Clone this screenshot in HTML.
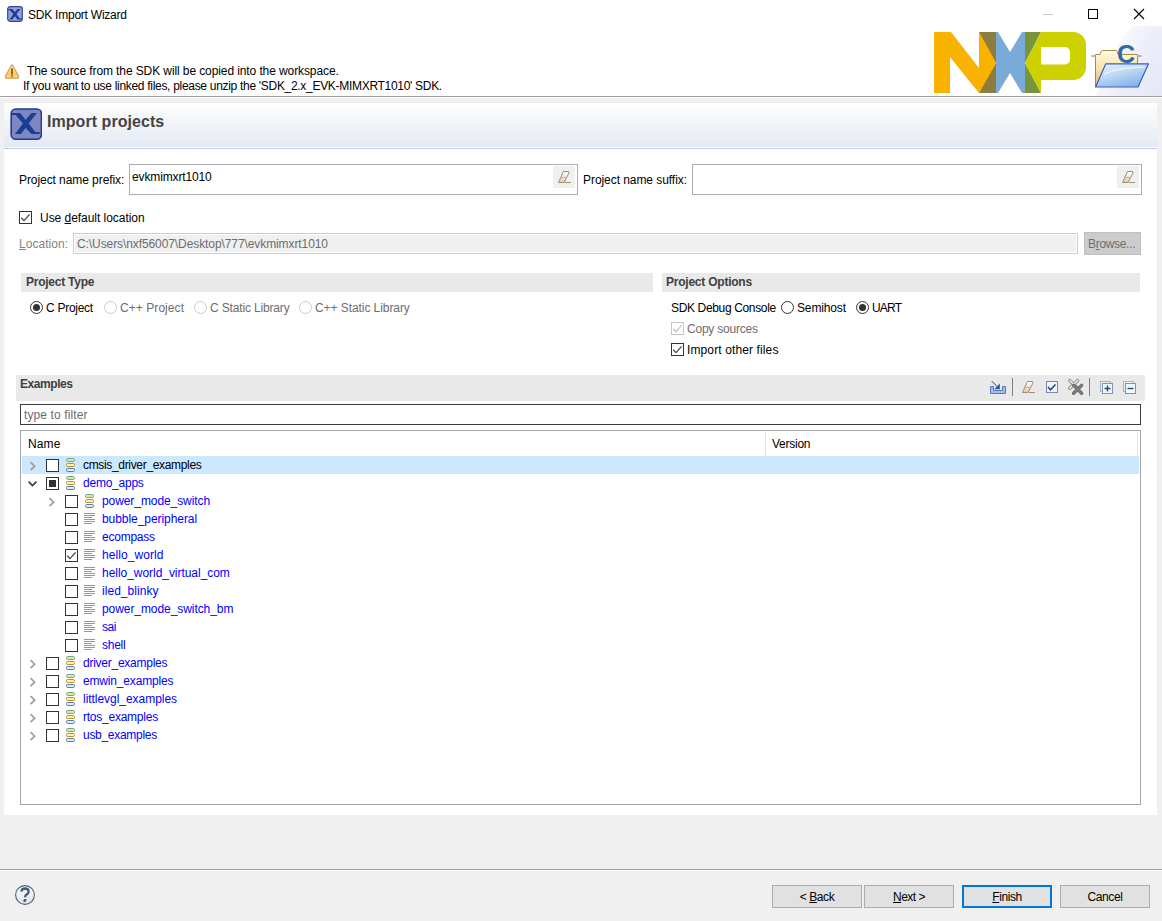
<!DOCTYPE html>
<html><head><meta charset="utf-8">
<style>
*{box-sizing:border-box}
html,body{margin:0;padding:0}
body{width:1162px;height:921px;overflow:hidden;position:relative;background:#f0f0f0;font-family:"Liberation Sans",sans-serif;font-size:12px;color:#000}
.a{position:absolute}
.t{position:absolute;white-space:nowrap;line-height:14px}
.b{font-weight:bold}
.cb{position:absolute;width:13px;height:13px;border:1px solid #333;background:#fff}
.rd{position:absolute;width:13px;height:13px;border:1px solid #333;border-radius:50%;background:#fff}
.hdr{position:absolute;background:#e9e9e9;height:19px}
.ht{position:absolute;white-space:nowrap;line-height:14px;font-weight:bold;color:#404040}
.btn{position:absolute;top:885px;height:23px;width:90px;border:1px solid #adadad;background:#e1e1e1;text-align:center;line-height:23px}
.lnk{color:#0000ff}
.gr{color:#6d6d6d}
u{text-decoration:underline;text-underline-offset:1px}
</style></head><body>
<!-- title bar + banner -->
<div class="a" style="left:0;top:0;width:1162px;height:96px;background:#fff"></div>
<div class="a" style="left:0;top:96px;width:1162px;height:1px;background:#a0a0a0"></div>
<div class="a" style="left:0;top:97px;width:1162px;height:1px;background:#fff"></div>

<!-- window icon -->
<svg class="a" style="left:7px;top:6px" width="16" height="16" viewBox="0 0 32 32">
<rect x="1.4" y="1.4" width="29.2" height="29.2" rx="5" fill="#9a9ed6" stroke="#27459a" stroke-width="2.4"/>
<path d="M3 6H10.5L15.8 12.2L21.2 6H27L18.9 15.8L25.2 24.5H29.5V27H21.2L15.8 20.6L10.8 27H5L12.7 15.8L5.8 8.5H3Z" fill="#173f96"/>
</svg>
<div class="t" style="left:28px;top:8px;letter-spacing:-0.23px">SDK Import Wizard</div>

<!-- window controls -->
<div class="a" style="left:1043px;top:14px;width:10px;height:1px;background:#c4c4c4"></div>
<div class="a" style="left:1088px;top:9px;width:10px;height:10px;border:1px solid #000"></div>
<svg class="a" style="left:1133px;top:8px" width="12" height="12" viewBox="0 0 12 12"><path d="M1 1L11 11M11 1L1 11" stroke="#000" stroke-width="1.1"/></svg>

<!-- warning -->
<svg class="a" style="left:4px;top:63px" width="16" height="17" viewBox="0 0 16 17">
<defs><linearGradient id="wg" x1="0" y1="0" x2="0" y2="1"><stop offset="0" stop-color="#fff8d8"/><stop offset="0.7" stop-color="#fcc95c"/><stop offset="1" stop-color="#fde08a"/></linearGradient></defs>
<path d="M8 1.8Q8.3 1.8 8.6 2.3L14.6 13.2Q15 14.8 13.6 15.2H2.4Q1 14.8 1.4 13.2L7.4 2.3Q7.7 1.8 8 1.8Z" fill="url(#wg)" stroke="#d29d52" stroke-width="1.2"/>
<rect x="7.1" y="5.2" width="1.8" height="6.3" rx="0.5" fill="#7d5616"/><rect x="7.1" y="12.2" width="1.8" height="1.6" fill="#8a6420"/>
</svg>
<div class="t" style="left:27.0px;top:64px;letter-spacing:-0.10px">The source from the SDK will be copied into the workspace.</div>
<div class="t" style="left:23px;top:79px;letter-spacing:-0.30px">If you want to use linked files, please unzip the 'SDK_2.x_EVK-MIMXRT1010' SDK.</div>

<!-- banner bg swoosh -->
<div class="a" style="left:1060px;top:26px;width:102px;height:70px;overflow:hidden">
<div class="a" style="left:30px;top:-60px;width:344px;height:344px;border-radius:50%;background:radial-gradient(circle closest-side at 50% 50%,#e2e4f4 0%,#e5e7f5 60%,#ecedf9 85%,#f6f6fc 99%,rgba(255,255,255,0) 100%)"></div>
</div>
<!-- NXP logo -->
<svg class="a" style="left:934px;top:32px" width="152" height="62" viewBox="0 0 152 62">
<polygon points="0,0 17,0 45,36 45,0 62,0 62,61 45,61 16,25 16,61 0,61" fill="#f9b200"/>
<polygon points="45,0 62,0 62,31" fill="#8b7d3c"/>
<polygon points="62,31 62,61 45,61" fill="#8b7d3c"/>
<polygon points="45,0 45,61 62,31" fill="#f9b200"/>
<polygon points="62,0 64,0 76,20 88,0 91,0 91,61 88,61 76,41 64,61 62,61" fill="#7aabd8"/>
<polygon points="91,0 107,0 91,31" fill="#7a943c"/>
<polygon points="91,31 107,61 91,61" fill="#7a943c"/>
<polygon points="107,0 91,31 107,61" fill="#cdd100"/>
<path d="M107 0H139A13 13 0 0 1 152 13V35A13 13 0 0 1 139 48H107V32.5H131A5 5 0 0 0 136 27.5V20A5 5 0 0 0 131 15H107Z" fill="#cdd100"/>
</svg>

<!-- folder icon -->
<svg class="a" style="left:1090px;top:40px" width="64" height="50" viewBox="0 0 64 50">
<defs>
<linearGradient id="fb" x1="0" y1="0" x2="0" y2="1"><stop offset="0" stop-color="#fffbe8"/><stop offset="0.5" stop-color="#f7e2a8"/><stop offset="1" stop-color="#e3bd6a"/></linearGradient>
<linearGradient id="ff" x1="0" y1="0" x2="0.6" y2="1"><stop offset="0" stop-color="#eef6fe"/><stop offset="0.45" stop-color="#c2dcf6"/><stop offset="1" stop-color="#86b4e8"/></linearGradient>
</defs>
<path d="M5.5 46V14.5H10Q10.5 10.5 13 10.5H26Q27.5 10.5 28 14.5H47.5V46Z" fill="url(#fb)" stroke="#a88845" stroke-width="1"/>
<text x="27" y="22.5" font-family="Liberation Sans" font-weight="bold" font-size="25" fill="#2f6aa6">C</text>
<ellipse cx="3.5" cy="16" rx="2.5" ry="1" fill="#b0b0b0"/>
<ellipse cx="49.5" cy="16" rx="2.5" ry="1" fill="#b0b0b0"/>
<path d="M15.8 23.8H58.5L48 47H5.6Z" fill="url(#ff)" stroke="#3a5ccc" stroke-width="1.2" stroke-linejoin="round"/>
<path d="M14 34Q30 27 55 27" stroke="#ffffff" stroke-opacity="0.6" stroke-width="1.5" fill="none"/>
</svg>

<!-- panel -->
<div class="a" style="left:4px;top:103px;width:1153px;height:712px;background:#fff"></div>
<div class="a" style="left:4px;top:103px;width:1153px;height:44px;background:linear-gradient(#fefefe 0%,#f5f7fa 35%,#e3e9f3 100%)"></div>
<div class="a" style="left:4px;top:148px;width:1153px;height:1px;background:#bccddf"></div>
<svg class="a" style="left:10px;top:108px" width="32" height="32" viewBox="0 0 32 32">
<rect x="1.2" y="1" width="30.2" height="30.2" rx="4.5" fill="#7f86c0" stroke="#1d3e93" stroke-width="1.6"/>
<path d="M1.9 5H10.1L15.6 11.7L21.5 5H26.9L18.7 15.6L25.4 24H29.7V26H21.5L15.6 19.9L10.9 26H5L12.9 15.6L5.8 7H1.9Z" fill="#173f96"/>
</svg>
<div class="t b" style="left:47px;top:113px;font-size:16px;line-height:18px;color:#444;letter-spacing:0.05px">Import projects</div>

<!-- prefix/suffix -->
<div class="t" style="left:19px;top:173px;letter-spacing:-0.07px">Project name prefix:</div>
<div class="a" style="left:129px;top:164px;width:449px;height:31px;border:1px solid #abadb3;background:#fff"></div>
<div class="t" style="left:132px;top:170px;letter-spacing:-0.13px">evkmimxrt1010</div>
<div class="a" style="left:553px;top:166px;width:22px;height:22px;background:#f0f0f0"></div>
<svg class="a" style="left:558px;top:171px" width="14" height="13" viewBox="0 0 14 13">
<defs><linearGradient id="eg558" x1="0" y1="0" x2="0" y2="1"><stop offset="0" stop-color="#ffffff"/><stop offset="0.4" stop-color="#f3ece2"/><stop offset="1" stop-color="#dccab0"/></linearGradient></defs>
<path d="M5.5 0.5H10Q11.5 0.5 11 2L6 11.5H0.5L5 1.5Q5.2 0.5 5.5 0.5Z" fill="url(#eg558)" stroke="#a38d68" stroke-width="1"/>
<path d="M3 6.5H8.5" stroke="#c8b69a" stroke-width="1"/>
<path d="M7 11.5H13" stroke="#a38d68" stroke-width="1"/>
</svg>
<div class="t" style="left:583px;top:173px;letter-spacing:-0.06px">Project name suffix:</div>
<div class="a" style="left:692px;top:164px;width:450px;height:31px;border:1px solid #abadb3;background:#fff"></div>
<div class="a" style="left:1117px;top:166px;width:22px;height:22px;background:#f0f0f0"></div>
<svg class="a" style="left:1122px;top:171px" width="14" height="13" viewBox="0 0 14 13">
<defs><linearGradient id="eg1122" x1="0" y1="0" x2="0" y2="1"><stop offset="0" stop-color="#ffffff"/><stop offset="0.4" stop-color="#f3ece2"/><stop offset="1" stop-color="#dccab0"/></linearGradient></defs>
<path d="M5.5 0.5H10Q11.5 0.5 11 2L6 11.5H0.5L5 1.5Q5.2 0.5 5.5 0.5Z" fill="url(#eg1122)" stroke="#a38d68" stroke-width="1"/>
<path d="M3 6.5H8.5" stroke="#c8b69a" stroke-width="1"/>
<path d="M7 11.5H13" stroke="#a38d68" stroke-width="1"/>
</svg>

<!-- default location -->
<div class="cb" style="left:19px;top:211px"></div>
<svg class="a" style="left:19px;top:211px" width="13" height="13"><path d="M2.3 6.8L5 9.6L10.6 3.4" stroke="#444" stroke-width="1.3" fill="none"/></svg>
<div class="t" style="left:40px;top:211px;letter-spacing:-0.04px">Use <u>d</u>efault location</div>
<div class="t" style="left:19px;top:237px;letter-spacing:0.04px;color:#838383"><u>L</u>ocation:</div>
<div class="a" style="left:73px;top:233px;width:1005px;height:21px;border:1px solid #cccccc;box-shadow:inset 0 0 0 1px #fff;background:#f0f0f0"></div>
<div class="t gr" style="left:77px;top:237px;letter-spacing:-0.09px">C:\Users\nxf56007\Desktop\777\evkmimxrt1010</div>
<div class="a" style="left:1084px;top:232px;width:57px;height:23px;border:1px solid #bfbfbf;background:#cccccc"></div>
<div class="t gr" style="left:1088.0px;top:237px;letter-spacing:-0.32px">B<u>r</u>owse...</div>

<!-- Project type -->
<div class="hdr" style="left:21px;top:273px;width:632px"></div>
<div class="ht" style="left:26.0px;top:275px;letter-spacing:-0.25px">Project Type</div>
<div class="rd" style="left:30px;top:301px"></div>
<div class="a" style="left:33px;top:304px;width:7px;height:7px;border-radius:50%;background:#333"></div>
<div class="t" style="left:46px;top:301px;letter-spacing:-0.27px">C Project</div>
<div class="rd" style="left:104px;top:301px;border-color:#ccc"></div>
<div class="t gr" style="left:120px;top:301px;letter-spacing:0.06px">C++ Project</div>
<div class="rd" style="left:194px;top:301px;border-color:#ccc"></div>
<div class="t gr" style="left:210px;top:301px;letter-spacing:-0.16px">C Static Library</div>
<div class="rd" style="left:299px;top:301px;border-color:#ccc"></div>
<div class="t gr" style="left:315px;top:301px;letter-spacing:-0.07px">C++ Static Library</div>

<!-- Project options -->
<div class="hdr" style="left:662px;top:273px;width:478px"></div>
<div class="ht" style="left:666px;top:275px;letter-spacing:-0.23px">Project Options</div>
<div class="t" style="left:671px;top:301px;letter-spacing:-0.35px">SDK Debug Console</div>
<div class="rd" style="left:781px;top:301px"></div>
<div class="t" style="left:797px;top:301px;letter-spacing:-0.14px">Semihost</div>
<div class="rd" style="left:856px;top:301px"></div>
<div class="a" style="left:859px;top:304px;width:7px;height:7px;border-radius:50%;background:#333"></div>
<div class="t" style="left:872px;top:301px;letter-spacing:-0.80px">UART</div>
<div class="cb" style="left:671px;top:322px;border-color:#c6c6c6"></div>
<svg class="a" style="left:671px;top:322px" width="13" height="13"><path d="M2.3 6.8L5 9.6L10.6 3.4" stroke="#c6c6c6" stroke-width="1.4" fill="none"/></svg>
<div class="t gr" style="left:687px;top:322px;letter-spacing:-0.22px">Copy sources</div>
<div class="cb" style="left:671px;top:343px"></div>
<svg class="a" style="left:671px;top:343px" width="13" height="13"><path d="M2.3 6.8L5 9.6L10.6 3.4" stroke="#444" stroke-width="1.3" fill="none"/></svg>
<div class="t" style="left:687px;top:343px;letter-spacing:0.12px">Import other files</div>

<!-- Examples -->
<div class="a" style="left:16px;top:375px;width:1129px;height:26px;background:#e9e9e9"></div>
<div class="ht" style="left:20px;top:377px;letter-spacing:-0.43px">Examples</div>
<div class="a" style="left:20px;top:404px;width:1121px;height:21px;border:1px solid #3c3c3c;background:#fff"></div>
<div class="t gr" style="left:24px;top:408px;letter-spacing:0.12px">type to filter</div>

<!-- toolbar -->
<svg class="a" style="left:989px;top:379px" width="18" height="16" viewBox="0 0 18 16">
<path d="M1.5 7.5V14.5H16.5V7.5H13.5V11.5H4.5V7.5Z" fill="#a3bde6" stroke="#5677bb" stroke-width="1"/>
<path d="M2.8 2.2L8.2 7.6" stroke="#27389a" stroke-width="1"/>
<path d="M10.8 4.6V10.2H5.2Z" fill="#1d5aa8"/>
</svg>
<div class="a" style="left:1012px;top:378px;width:1px;height:18px;background:#7f7f7f"></div>
<svg class="a" style="left:1022px;top:381px" width="14" height="13" viewBox="0 0 14 13">
<defs><linearGradient id="eg1022" x1="0" y1="0" x2="0" y2="1"><stop offset="0" stop-color="#ffffff"/><stop offset="0.4" stop-color="#f3ece2"/><stop offset="1" stop-color="#dccab0"/></linearGradient></defs>
<path d="M5.5 0.5H10Q11.5 0.5 11 2L6 11.5H0.5L5 1.5Q5.2 0.5 5.5 0.5Z" fill="url(#eg1022)" stroke="#a38d68" stroke-width="1"/>
<path d="M3 6.5H8.5" stroke="#c8b69a" stroke-width="1"/>
<path d="M7 11.5H13" stroke="#a38d68" stroke-width="1"/>
</svg>
<svg class="a" style="left:1046px;top:381px" width="13" height="13" viewBox="0 0 13 13">
<rect x="0.5" y="0.5" width="11" height="11" fill="#e6f5ff" stroke="#7b8aa6"/>
<path d="M2 6L4.5 8.8L9.5 3.5" fill="none" stroke="#2b4a7c" stroke-width="1.6"/>
</svg>
<svg class="a" style="left:1067px;top:378px" width="18" height="18" viewBox="0 0 18 18">
<path d="M2.8 2.6L10.6 10.2M10.6 2.6L2.8 10.2" stroke="#8f8f88" stroke-width="3.4" stroke-linecap="round"/>
<path d="M2.8 2.6L10.6 10.2M10.6 2.6L2.8 10.2" stroke="#f2f2f2" stroke-width="1.4" stroke-linecap="round"/>
<path d="M6.6 7.4L14.6 15.2M14.6 7.4L6.6 15.2" stroke="#6a6a6a" stroke-width="3.4" stroke-linecap="round"/>
<path d="M6.6 7.4L14.6 15.2M14.6 7.4L6.6 15.2" stroke="#858585" stroke-width="1.2" stroke-linecap="round"/>
</svg>
<div class="a" style="left:1089px;top:378px;width:1px;height:18px;background:#7f7f7f"></div>
<svg class="a" style="left:1100px;top:381px" width="14" height="14" viewBox="0 0 14 14">
<rect x="0.5" y="0.5" width="10" height="10" fill="#e3f3fd" stroke="#a4b4cc"/>
<rect x="2.5" y="2.5" width="10" height="10" fill="#eef9ff" stroke="#8592aa"/>
<path d="M4.5 7.5H10.5M7.5 4.5V10.5" stroke="#1d4a80" stroke-width="1.4"/>
</svg>
<svg class="a" style="left:1123px;top:381px" width="14" height="14" viewBox="0 0 14 14">
<rect x="0.5" y="0.5" width="10" height="10" fill="#e3f3fd" stroke="#a4b4cc"/>
<rect x="2.5" y="2.5" width="10" height="10" fill="#eef9ff" stroke="#8592aa"/>
<path d="M4.5 7.5H10.5" stroke="#1d4a80" stroke-width="1.4"/>
</svg>
<!-- tree -->
<div class="a" style="left:20px;top:430px;width:1121px;height:375px;border:1px solid #a2a5ac;background:#fff"></div>
<div class="t" style="left:28px;top:437px;letter-spacing:0.13px">Name</div>
<div class="a" style="left:765px;top:432px;width:1px;height:24px;background:#e5e5e5"></div>
<div class="a" style="left:1137px;top:432px;width:1px;height:24px;background:#e5e5e5"></div>
<div class="t" style="left:772px;top:437px;letter-spacing:-0.26px">Version</div>
<div class="a" style="left:22px;top:456px;width:1117px;height:18px;background:#cce8ff"></div>

<!-- tree rows -->
<svg class="a" style="left:28px;top:461px" width="9" height="10"><path d="M2.6 1.2L6.6 5.2L2.6 9.2" stroke="#a0a0a0" stroke-width="1.8" fill="none"/></svg>
<div class="cb" style="left:46px;top:459px"></div>
<svg class="a" style="left:66px;top:458px" width="9" height="14" viewBox="0 0 9 14"><rect x="0.5" y="0.5" width="8" height="3" rx="1.2" fill="#e3e78f" stroke="#72a68e"/><rect x="0.5" y="5.5" width="8" height="3" rx="1.2" fill="#fff2c0" stroke="#b8921e"/><rect x="0.5" y="10.5" width="8" height="3" rx="1.2" fill="#e2ecf0" stroke="#5a7ab8"/></svg>
<div class="t" style="left:83px;top:458px;color:#000;letter-spacing:-0.33px">cmsis_driver_examples</div>
<svg class="a" style="left:28px;top:479px" width="10" height="9"><path d="M0.6 2.7L4.5 6.6L8.4 2.7" stroke="#404040" stroke-width="1.8" fill="none"/></svg>
<div class="cb" style="left:46px;top:477px"></div>
<div class="a" style="left:49px;top:480px;width:7px;height:7px;background:#333"></div>
<svg class="a" style="left:66px;top:476px" width="9" height="14" viewBox="0 0 9 14"><rect x="0.5" y="0.5" width="8" height="3" rx="1.2" fill="#e3e78f" stroke="#72a68e"/><rect x="0.5" y="5.5" width="8" height="3" rx="1.2" fill="#fff2c0" stroke="#b8921e"/><rect x="0.5" y="10.5" width="8" height="3" rx="1.2" fill="#e2ecf0" stroke="#5a7ab8"/></svg>
<div class="t" style="left:83px;top:476px;color:#0000ff;letter-spacing:-0.23px">demo_apps</div>
<svg class="a" style="left:47px;top:497px" width="9" height="10"><path d="M2.6 1.2L6.6 5.2L2.6 9.2" stroke="#a0a0a0" stroke-width="1.8" fill="none"/></svg>
<div class="cb" style="left:65px;top:495px"></div>
<svg class="a" style="left:85px;top:494px" width="9" height="14" viewBox="0 0 9 14"><rect x="0.5" y="0.5" width="8" height="3" rx="1.2" fill="#e3e78f" stroke="#72a68e"/><rect x="0.5" y="5.5" width="8" height="3" rx="1.2" fill="#fff2c0" stroke="#b8921e"/><rect x="0.5" y="10.5" width="8" height="3" rx="1.2" fill="#e2ecf0" stroke="#5a7ab8"/></svg>
<div class="t" style="left:102px;top:494px;color:#0000ff;letter-spacing:-0.08px">power_mode_switch</div>
<div class="cb" style="left:65px;top:513px"></div>
<svg class="a" style="left:84px;top:513px" width="11" height="11" viewBox="0 0 11 11"><path d="M0 0.5H11M0 2.5H11M0 4.5H8M0 6.5H11M0 8.5H11M0 10.5H8" stroke="#8299c2" stroke-width="1"/></svg>
<div class="t" style="left:102px;top:512px;color:#0000ff;letter-spacing:-0.06px">bubble_peripheral</div>
<div class="cb" style="left:65px;top:531px"></div>
<svg class="a" style="left:84px;top:531px" width="11" height="11" viewBox="0 0 11 11"><path d="M0 0.5H11M0 2.5H11M0 4.5H8M0 6.5H11M0 8.5H11M0 10.5H8" stroke="#8299c2" stroke-width="1"/></svg>
<div class="t" style="left:102px;top:530px;color:#0000ff;letter-spacing:-0.23px">ecompass</div>
<div class="cb" style="left:65px;top:549px"></div>
<svg class="a" style="left:65px;top:549px" width="13" height="13"><path d="M2.3 6.8L5 9.6L10.6 3.4" stroke="#444" stroke-width="1.3" fill="none"/></svg>
<svg class="a" style="left:84px;top:549px" width="11" height="11" viewBox="0 0 11 11"><path d="M0 0.5H11M0 2.5H11M0 4.5H8M0 6.5H11M0 8.5H11M0 10.5H8" stroke="#8299c2" stroke-width="1"/></svg>
<div class="t" style="left:102px;top:548px;color:#0000ff;letter-spacing:0.08px">hello_world</div>
<div class="cb" style="left:65px;top:567px"></div>
<svg class="a" style="left:84px;top:567px" width="11" height="11" viewBox="0 0 11 11"><path d="M0 0.5H11M0 2.5H11M0 4.5H8M0 6.5H11M0 8.5H11M0 10.5H8" stroke="#8299c2" stroke-width="1"/></svg>
<div class="t" style="left:102px;top:566px;color:#0000ff;letter-spacing:-0.04px">hello_world_virtual_com</div>
<div class="cb" style="left:65px;top:585px"></div>
<svg class="a" style="left:84px;top:585px" width="11" height="11" viewBox="0 0 11 11"><path d="M0 0.5H11M0 2.5H11M0 4.5H8M0 6.5H11M0 8.5H11M0 10.5H8" stroke="#8299c2" stroke-width="1"/></svg>
<div class="t" style="left:102px;top:584px;color:#0000ff;letter-spacing:0.04px">iled_blinky</div>
<div class="cb" style="left:65px;top:603px"></div>
<svg class="a" style="left:84px;top:603px" width="11" height="11" viewBox="0 0 11 11"><path d="M0 0.5H11M0 2.5H11M0 4.5H8M0 6.5H11M0 8.5H11M0 10.5H8" stroke="#8299c2" stroke-width="1"/></svg>
<div class="t" style="left:102px;top:602px;color:#0000ff;letter-spacing:-0.07px">power_mode_switch_bm</div>
<div class="cb" style="left:65px;top:621px"></div>
<svg class="a" style="left:84px;top:621px" width="11" height="11" viewBox="0 0 11 11"><path d="M0 0.5H11M0 2.5H11M0 4.5H8M0 6.5H11M0 8.5H11M0 10.5H8" stroke="#8299c2" stroke-width="1"/></svg>
<div class="t" style="left:102px;top:620px;color:#0000ff;letter-spacing:-0.50px">sai</div>
<div class="cb" style="left:65px;top:639px"></div>
<svg class="a" style="left:84px;top:639px" width="11" height="11" viewBox="0 0 11 11"><path d="M0 0.5H11M0 2.5H11M0 4.5H8M0 6.5H11M0 8.5H11M0 10.5H8" stroke="#8299c2" stroke-width="1"/></svg>
<div class="t" style="left:102px;top:638px;color:#0000ff;letter-spacing:-0.25px">shell</div>
<svg class="a" style="left:28px;top:659px" width="9" height="10"><path d="M2.6 1.2L6.6 5.2L2.6 9.2" stroke="#a0a0a0" stroke-width="1.8" fill="none"/></svg>
<div class="cb" style="left:46px;top:657px"></div>
<svg class="a" style="left:66px;top:656px" width="9" height="14" viewBox="0 0 9 14"><rect x="0.5" y="0.5" width="8" height="3" rx="1.2" fill="#e3e78f" stroke="#72a68e"/><rect x="0.5" y="5.5" width="8" height="3" rx="1.2" fill="#fff2c0" stroke="#b8921e"/><rect x="0.5" y="10.5" width="8" height="3" rx="1.2" fill="#e2ecf0" stroke="#5a7ab8"/></svg>
<div class="t" style="left:83px;top:656px;color:#0000ff;letter-spacing:-0.25px">driver_examples</div>
<svg class="a" style="left:28px;top:677px" width="9" height="10"><path d="M2.6 1.2L6.6 5.2L2.6 9.2" stroke="#a0a0a0" stroke-width="1.8" fill="none"/></svg>
<div class="cb" style="left:46px;top:675px"></div>
<svg class="a" style="left:66px;top:674px" width="9" height="14" viewBox="0 0 9 14"><rect x="0.5" y="0.5" width="8" height="3" rx="1.2" fill="#e3e78f" stroke="#72a68e"/><rect x="0.5" y="5.5" width="8" height="3" rx="1.2" fill="#fff2c0" stroke="#b8921e"/><rect x="0.5" y="10.5" width="8" height="3" rx="1.2" fill="#e2ecf0" stroke="#5a7ab8"/></svg>
<div class="t" style="left:83px;top:674px;color:#0000ff;letter-spacing:-0.17px">emwin_examples</div>
<svg class="a" style="left:28px;top:695px" width="9" height="10"><path d="M2.6 1.2L6.6 5.2L2.6 9.2" stroke="#a0a0a0" stroke-width="1.8" fill="none"/></svg>
<div class="cb" style="left:46px;top:693px"></div>
<svg class="a" style="left:66px;top:692px" width="9" height="14" viewBox="0 0 9 14"><rect x="0.5" y="0.5" width="8" height="3" rx="1.2" fill="#e3e78f" stroke="#72a68e"/><rect x="0.5" y="5.5" width="8" height="3" rx="1.2" fill="#fff2c0" stroke="#b8921e"/><rect x="0.5" y="10.5" width="8" height="3" rx="1.2" fill="#e2ecf0" stroke="#5a7ab8"/></svg>
<div class="t" style="left:83px;top:692px;color:#0000ff;letter-spacing:-0.04px">littlevgl_examples</div>
<svg class="a" style="left:28px;top:713px" width="9" height="10"><path d="M2.6 1.2L6.6 5.2L2.6 9.2" stroke="#a0a0a0" stroke-width="1.8" fill="none"/></svg>
<div class="cb" style="left:46px;top:711px"></div>
<svg class="a" style="left:66px;top:710px" width="9" height="14" viewBox="0 0 9 14"><rect x="0.5" y="0.5" width="8" height="3" rx="1.2" fill="#e3e78f" stroke="#72a68e"/><rect x="0.5" y="5.5" width="8" height="3" rx="1.2" fill="#fff2c0" stroke="#b8921e"/><rect x="0.5" y="10.5" width="8" height="3" rx="1.2" fill="#e2ecf0" stroke="#5a7ab8"/></svg>
<div class="t" style="left:83px;top:710px;color:#0000ff;letter-spacing:-0.24px">rtos_examples</div>
<svg class="a" style="left:28px;top:731px" width="9" height="10"><path d="M2.6 1.2L6.6 5.2L2.6 9.2" stroke="#a0a0a0" stroke-width="1.8" fill="none"/></svg>
<div class="cb" style="left:46px;top:729px"></div>
<svg class="a" style="left:66px;top:728px" width="9" height="14" viewBox="0 0 9 14"><rect x="0.5" y="0.5" width="8" height="3" rx="1.2" fill="#e3e78f" stroke="#72a68e"/><rect x="0.5" y="5.5" width="8" height="3" rx="1.2" fill="#fff2c0" stroke="#b8921e"/><rect x="0.5" y="10.5" width="8" height="3" rx="1.2" fill="#e2ecf0" stroke="#5a7ab8"/></svg>
<div class="t" style="left:83px;top:728px;color:#0000ff;letter-spacing:-0.29px">usb_examples</div>

<!-- bottom separator -->
<div class="a" style="left:0;top:869px;width:1162px;height:1px;background:#a0a0a0"></div>
<div class="a" style="left:0;top:870px;width:1162px;height:1px;background:#fff"></div>
<svg class="a" style="left:15px;top:885px" width="20" height="20" viewBox="0 0 20 20">
<defs><linearGradient id="hg" x1="0" y1="0" x2="0" y2="1"><stop offset="0" stop-color="#fafafa"/><stop offset="1" stop-color="#e4e4e6"/></linearGradient></defs><circle cx="10" cy="10" r="9.4" fill="url(#hg)" stroke="#4b5f86" stroke-width="1.1"/>
<path d="M6.4 6.6Q6.6 3.6 10 3.5Q13.6 3.6 13.6 6.4Q13.6 8.4 11.6 9.6Q10.1 10.5 10.1 12.3" fill="none" stroke="#44597f" stroke-width="2.3"/><path d="M9 14.6L11.2 14.4L10.6 16.4L8.8 16.6Z" fill="#44597f" stroke="#44597f" stroke-width="0.8" stroke-linejoin="round"/>
</svg>
<div class="btn" style="left:772px;letter-spacing:-0.40px">&lt; <u>B</u>ack</div>
<div class="btn" style="left:864px;letter-spacing:-0.52px"><u>N</u>ext &gt;</div>
<div class="btn" style="left:962px;border:2px solid #0078d7;line-height:21px;letter-spacing:-0.44px"><u>F</u>inish</div>
<div class="btn" style="left:1060px;letter-spacing:-0.36px">Cancel</div>

</body></html>
